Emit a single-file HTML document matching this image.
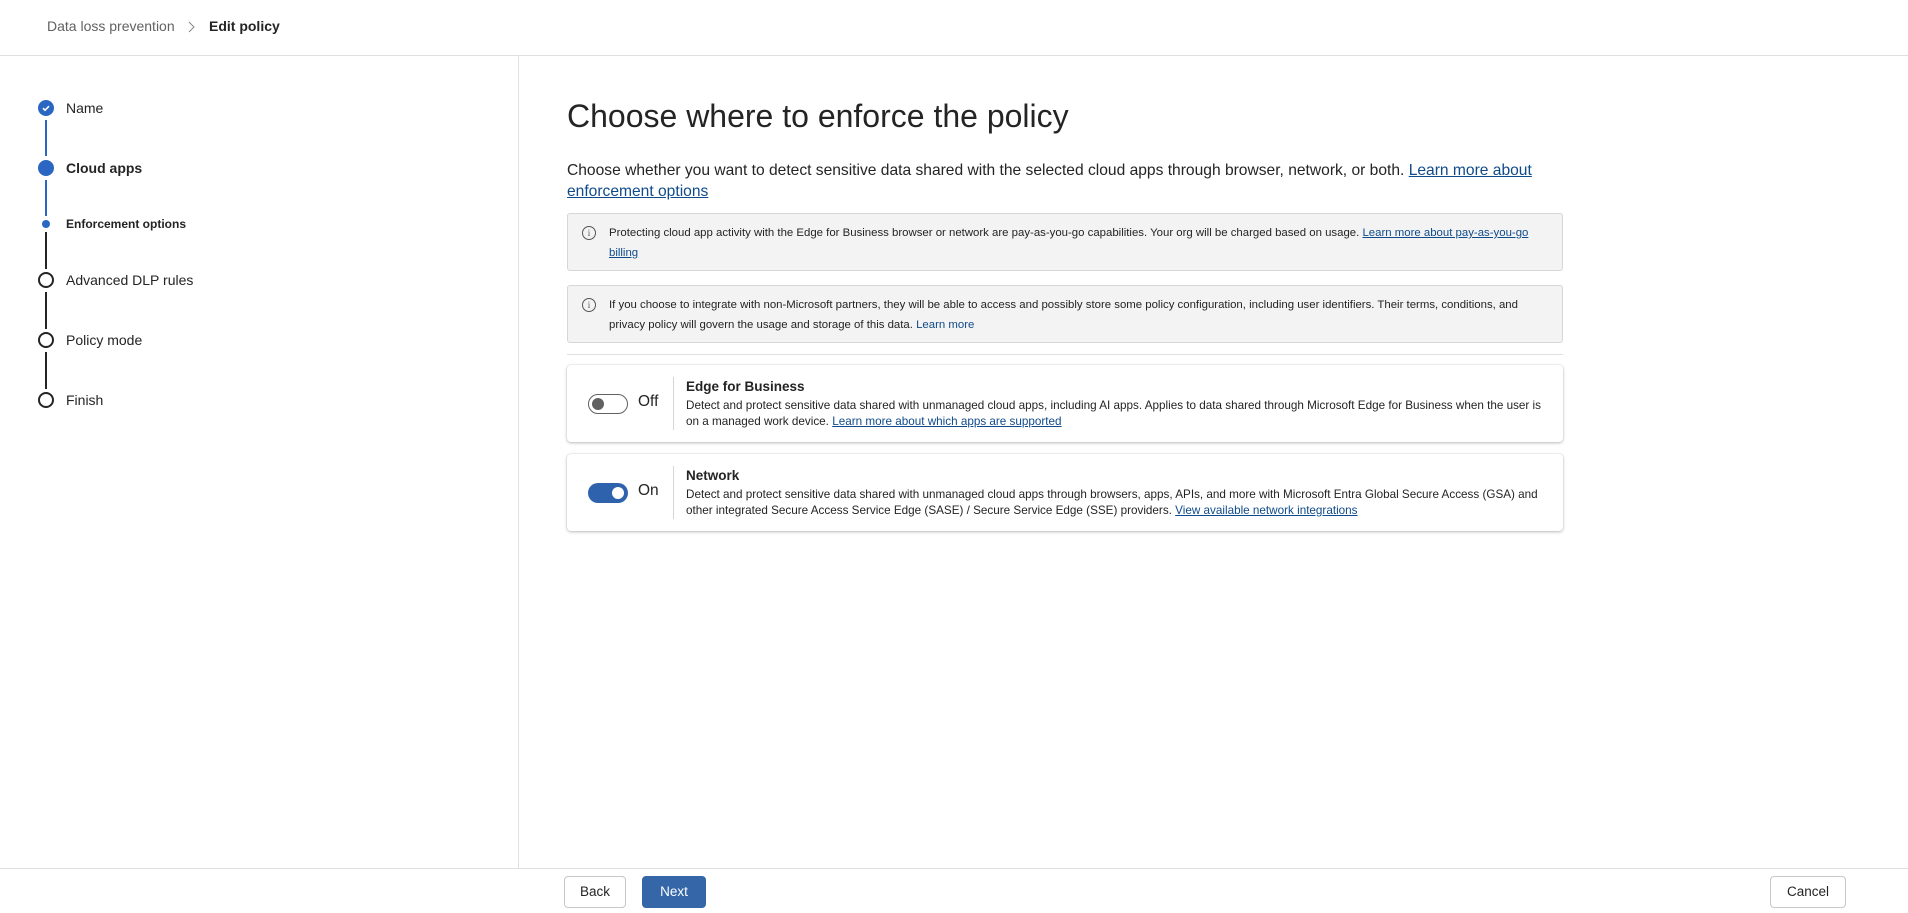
<!DOCTYPE html>
<html><head><meta charset="utf-8"><style>
*{box-sizing:border-box;margin:0;padding:0}
body{width:1908px;height:913px;background:#fff;font-family:"Liberation Sans",sans-serif;color:#242424;position:relative;overflow:hidden}
.a{position:absolute}
.hdr{left:0;top:0;width:1908px;height:56px;border-bottom:1px solid #e0e0e0}
.left{left:0;top:56px;width:519px;height:812px;border-right:1px solid #e0e0e0}
.foot{left:0;top:868px;width:1908px;height:45px;border-top:1px solid #e0e0e0}
.step{font-size:14px;color:#242424;left:66px}
.circ{width:16px;height:16px;border-radius:50%;left:38px}
.ln{left:45px;width:2px}
a{color:#0f4a8a;text-decoration:underline}
.info{left:567px;width:996px;background:#f3f3f3;border:1px solid #d6d6d6;border-radius:3px;font-size:11.4px;line-height:20px;padding:9px 20px 0 41px;color:#242424}
.ic{left:14px;top:12px;width:14px;height:14px;border:1px solid #555;border-radius:50%;font-size:9px;line-height:12px;text-align:center;color:#555;font-family:"Liberation Serif",serif}
.card{left:567px;width:996px;height:77px;background:#fff;border-radius:4px;box-shadow:0 1px 3px rgba(0,0,0,.25),0 0 1px rgba(0,0,0,.2)}
.tg{left:21px;top:29px;width:40px;height:20px;border-radius:10px}
.sep{left:106px;top:12px;width:1px;height:53px;background:#d6d6d6}
.ct{left:119px;top:14px;font-size:13.5px;font-weight:bold}
.cd{left:119px;top:33px;width:862px;font-size:11.7px;line-height:16px}
.btn{top:7px;height:32px;border:1px solid #c7c7c7;border-radius:4px;font-size:13.5px;text-align:center;line-height:30px;background:#fff}
</style></head><body>
<div class="a hdr"></div>
<div class="a" style="left:47px;top:18px;font-size:14px;color:#616161">Data loss prevention</div>
<svg class="a" style="left:186px;top:21px" width="10" height="12"><path d="M3 1l5 5-5 5" stroke="#888" fill="none" stroke-width="1"/></svg>
<div class="a" style="left:209px;top:18px;font-size:14px;font-weight:bold;color:#242424">Edit policy</div>
<div class="a left"></div>

<div class="a ln" style="top:120px;height:36px;background:#2b66c3"></div>
<div class="a ln" style="top:180px;height:36px;background:#2b66c3"></div>
<div class="a ln" style="top:232px;height:37px;background:#242424"></div>
<div class="a ln" style="top:292px;height:37px;background:#242424"></div>
<div class="a ln" style="top:352px;height:37px;background:#242424"></div>
<div class="a circ" style="top:100px;background:#2b66c3"></div>
<svg class="a" style="left:40px;top:102px" width="12" height="12"><path d="M3 6.2l2 2 4-4" stroke="#fff" stroke-width="1.6" fill="none"/></svg>
<div class="a step" style="top:100px">Name</div>
<div class="a circ" style="top:160px;background:#2b66c3"></div>
<div class="a step" style="top:160px;font-weight:bold">Cloud apps</div>
<div class="a" style="left:42px;top:220px;width:8px;height:8px;border-radius:50%;background:#2b66c3"></div>
<div class="a step" style="top:217px;font-size:12px;font-weight:bold">Enforcement options</div>
<div class="a circ" style="top:272px;border:2px solid #242424;background:#fff"></div>
<div class="a step" style="top:272px">Advanced DLP rules</div>
<div class="a circ" style="top:332px;border:2px solid #242424;background:#fff"></div>
<div class="a step" style="top:332px">Policy mode</div>
<div class="a circ" style="top:392px;border:2px solid #242424;background:#fff"></div>
<div class="a step" style="top:392px">Finish</div>

<div class="a" style="left:567px;top:98px;font-size:32px;color:#242424">Choose where to enforce the policy</div>
<div class="a" style="left:567px;top:160px;width:1000px;font-size:15.6px;line-height:21px">Choose whether you want to detect sensitive data shared with the selected cloud apps through browser, network, or both. <a>Learn more about enforcement options</a></div>

<div class="a info" style="top:213px;height:58px"><div class="a ic">i</div>Protecting cloud app activity with the Edge for Business browser or network are pay-as-you-go capabilities. Your org will be charged based on usage. <a>Learn more about pay-as-you-go billing</a></div>
<div class="a info" style="top:285px;height:58px"><div class="a ic">i</div>If you choose to integrate with non-Microsoft partners, they will be able to access and possibly store some policy configuration, including user identifiers. Their terms, conditions, and privacy policy will govern the usage and storage of this data. <span style="color:#0f4a8a">Learn more</span></div>
<div class="a" style="left:567px;top:354px;width:996px;height:1px;background:#e0e0e0"></div>

<div class="a card" style="top:365px">
 <div class="a tg" style="border:1px solid #616161;background:#fff"><div class="a" style="left:3px;top:3px;width:12px;height:12px;border-radius:50%;background:#616161"></div></div>
 <div class="a" style="left:71px;top:28px;font-size:15.5px">Off</div>
 <div class="a sep"></div>
 <div class="a ct">Edge for Business</div>
 <div class="a cd">Detect and protect sensitive data shared with unmanaged cloud apps, including AI apps. Applies to data shared through Microsoft Edge for Business when the user is on a managed work device. <a>Learn more about which apps are supported</a></div>
</div>
<div class="a card" style="top:454px">
 <div class="a tg" style="background:#2f62ad"><div class="a" style="left:24px;top:4px;width:12px;height:12px;border-radius:50%;background:#fff"></div></div>
 <div class="a" style="left:71px;top:28px;font-size:15.5px">On</div>
 <div class="a sep"></div>
 <div class="a ct">Network</div>
 <div class="a cd">Detect and protect sensitive data shared with unmanaged cloud apps through browsers, apps, APIs, and more with Microsoft Entra Global Secure Access (GSA) and other integrated Secure Access Service Edge (SASE) / Secure Service Edge (SSE) providers. <a>View available network integrations</a></div>
</div>

<div class="a foot">
 <div class="a btn" style="left:564px;width:62px">Back</div>
 <div class="a btn" style="left:642px;width:64px;background:#3466a8;border-color:#3466a8;color:#fff">Next</div>
 <div class="a btn" style="left:1770px;width:76px">Cancel</div>
</div>
</body></html>
